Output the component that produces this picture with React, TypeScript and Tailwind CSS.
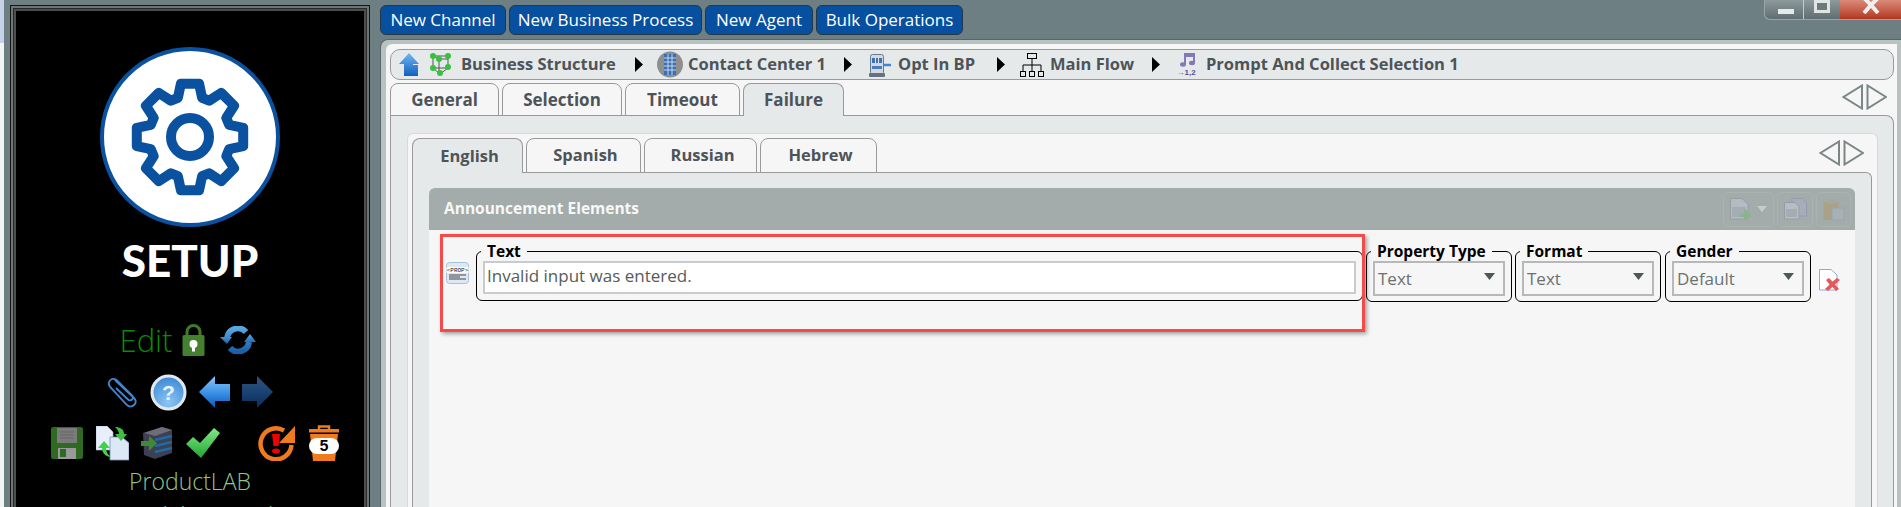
import type { ReactNode } from 'react'

const sans = "font-['Open_Sans',sans-serif]"

// 8 tooth cog outline, stroked not filled
const gearPath = (() => {
  const cx = 90
  const cy = 90
  const pts: string[] = []
  for (let i = 0; i < 8; i++) {
    const a = (i * Math.PI) / 4 - Math.PI / 2
    const p = (r: number, o: number) =>
      `${(cx + r * Math.cos(a + o)).toFixed(1)} ${(cy + r * Math.sin(a + o)).toFixed(1)}`
    pts.push(`${i === 0 ? 'M' : 'L'}${p(41, -0.3)}`, `L${p(54, -0.17)}`, `L${p(54, 0.17)}`, `L${p(41, 0.3)}`)
  }
  return pts.join(' ') + ' Z'
})()

function Logo() {
  return (
    <svg width="180" height="180" viewBox="0 0 180 180">
      <circle cx="90" cy="90" r="88" fill="#fff" stroke="#0a52a0" strokeWidth="4" />
      <path d={gearPath} fill="none" stroke="#0a52a0" strokeWidth="10" strokeLinejoin="round" />
      <circle cx="90" cy="90" r="19" fill="none" stroke="#0a52a0" strokeWidth="10" />
    </svg>
  )
}

function NavArrows({ w, h }: { w: number; h: number }) {
  return (
    <svg width={w} height={h} viewBox="0 0 45 26" preserveAspectRatio="none">
      <path d="M20 1.5V24.5L1.5 13Z M25.5 1.5V24.5L44 13Z" fill="none" stroke="#7d8686" strokeWidth="2" />
    </svg>
  )
}

const Lock = () => (
  <svg width="23" height="32" viewBox="0 0 23 32">
    <path d="M5 14V8a6.5 6.5 0 0 1 13 0v3" fill="none" stroke="#3f7a2c" strokeWidth="3" />
    <rect x="0.5" y="11" width="22" height="21" rx="1.5" fill="#44802e" />
    <circle cx="11.5" cy="20" r="4" fill="#fff" />
    <rect x="10" y="21" width="3" height="6.5" fill="#fff" />
  </svg>
)

const Refresh = () => (
  <svg width="36" height="28" viewBox="0 0 36 28">
    <defs>
      <linearGradient id="rf" x1="0" y1="0" x2="0" y2="1">
        <stop offset="0" stopColor="#58a6e2" />
        <stop offset="1" stopColor="#1a5fa8" />
      </linearGradient>
    </defs>
    <path d="M7 12a11 11 0 0 1 19-6M29 16a11 11 0 0 1-19 6" fill="none" stroke="url(#rf)" strokeWidth="6" />
    <path d="M0 11h12l-5 7Z M24 16h12l-6-8Z" fill="url(#rf)" />
  </svg>
)

const Clip = () => (
  <svg width="31" height="31" viewBox="0 0 31 31">
    <path
      d="M8 3 27 21c3 3 2 5 0 7s-5 2-7 0L4 11C1 8 1 6 3 3.500s5-2 7 0l15 15c2 2 1 3 0 4s-3 1-4 0L9 11"
      fill="none"
      stroke="#3f86d4"
      strokeWidth="1.800"
    />
  </svg>
)

const Help = () => (
  <svg width="37" height="37" viewBox="0 0 37 37">
    <defs>
      <radialGradient id="hp" cx="0.5" cy="0.8" r="0.8">
        <stop offset="0" stopColor="#8cc6f4" />
        <stop offset="1" stopColor="#3a88d4" />
      </radialGradient>
    </defs>
    <circle cx="18.500" cy="18.500" r="16.500" fill="url(#hp)" stroke="#e4e8ec" strokeWidth="3" />
    <text x="18.500" y="26" textAnchor="middle" fontSize="21" fontWeight="700" fill="#e8f2fb" fontFamily="Liberation Sans">
      ?
    </text>
  </svg>
)

const ArrowLeft = () => (
  <svg width="31" height="32" viewBox="0 0 31 32">
    <defs>
      <linearGradient id="al" x1="0" y1="0" x2="0" y2="1">
        <stop offset="0" stopColor="#8cc8f8" />
        <stop offset="0.5" stopColor="#3e94e8" />
        <stop offset="1" stopColor="#0b57b4" />
      </linearGradient>
    </defs>
    <path d="M0 16 16 0V8H31V25H16V32Z" fill="url(#al)" />
  </svg>
)

const ArrowRight = () => (
  <svg width="31" height="32" viewBox="0 0 31 32">
    <defs>
      <linearGradient id="ar" x1="0" y1="0" x2="0" y2="1">
        <stop offset="0" stopColor="#34557c" />
        <stop offset="0.5" stopColor="#1a4272" />
        <stop offset="1" stopColor="#0b2d5c" />
      </linearGradient>
    </defs>
    <path d="M31 16 15 0V8H0V25H15V32Z" fill="url(#ar)" />
  </svg>
)

const Floppy = () => (
  <svg width="32" height="32" viewBox="0 0 32 32">
    <rect width="32" height="32" rx="2.500" fill="#2f6a22" />
    <rect x="6" y="1" width="20" height="15" fill="#7b7b7b" />
    <path d="M9 5h14M9 8h14M9 11h14" stroke="#666" strokeWidth="1.200" />
    <rect x="7" y="21" width="18" height="11" fill="#9a9a9a" />
    <rect x="9" y="22" width="6" height="8" fill="#2f6a22" />
  </svg>
)

const CopyDocs = () => (
  <svg width="33" height="35" viewBox="0 0 33 35">
    <path d="M0 0H11L17 6V24H0Z" fill="#e8effa" stroke="#a8bcd8" strokeWidth="0.600" />
    <path d="M14 11H26L33 17V34H14Z" fill="#dde8f6" stroke="#7c94b8" strokeWidth="0.800" />
    <path d="M19 1c5 0 9 2 9 7h3l-6 7-6-7h4c0-3-2-5-4-7Z" fill="#3fbf45" />
    <path d="M8 15 2 22h4c0 5 4 9 9 9-3-2-5-5-5-9h4Z" fill="#3fd24a" />
  </svg>
)

const Server = () => (
  <svg width="31" height="32" viewBox="0 0 31 32">
    <path d="M2 6 21 0 31 3V26L14 32 3 28Z" fill="#3d3f52" />
    <path d="M3 6 21 0 31 3 14 9Z" fill="#6e6e78" />
    <path d="M14 13 31 9M14 19 31 15M14 25 31 21" stroke="#1d6ba8" strokeWidth="2.500" />
    <path d="M0 14H8V9L16 16 8 24V19H0Z" fill="#3f8a33" />
  </svg>
)

const Check = () => (
  <svg width="34" height="30" viewBox="0 0 34 30">
    <defs>
      <linearGradient id="ck" x1="0" y1="0" x2="0" y2="1">
        <stop offset="0" stopColor="#86e68a" />
        <stop offset="1" stopColor="#1fa82e" />
      </linearGradient>
    </defs>
    <path d="M0 16 7 9 14 15 28 0 34 5 15 30Z" fill="url(#ck)" />
  </svg>
)

const Overdue = () => (
  <svg width="37" height="36" viewBox="0 0 37 36">
    <path d="M26 5.500A15.500 15.500 0 1 0 33.500 20" fill="none" stroke="#f07a1e" strokeWidth="4.500" />
    <path d="M37 1V18H21Z" fill="#f07a1e" />
    <path d="M14 9H22L20.500 21H15.500Z" fill="#f00000" />
    <ellipse cx="18" cy="26" rx="4" ry="2.500" fill="#f00000" />
  </svg>
)

const Bin = () => (
  <svg width="30" height="36" viewBox="0 0 30 36">
    <path d="M10 4V1.500h10V4" fill="none" stroke="#f07a1e" strokeWidth="2.500" />
    <rect x="0" y="4" width="30" height="3.500" fill="#f07a1e" />
    <path d="M1 9H29L26 36H4Z" fill="#f07a1e" />
    <rect x="0" y="13" width="30" height="16" rx="8" fill="#fff" />
    <text x="15" y="26" textAnchor="middle" fontSize="16" fontWeight="700" fill="#000" fontFamily="Liberation Mono">
      5
    </text>
  </svg>
)

const UpArrow = () => (
  <svg width="20" height="23" viewBox="0 0 20 23">
    <defs>
      <linearGradient id="up" x1="0" y1="0" x2="0" y2="1">
        <stop offset="0" stopColor="#6fb7f2" />
        <stop offset="1" stopColor="#1160bd" />
      </linearGradient>
    </defs>
    <path d="M10 0 20 11H14V12H19V23H5V11H0Z" fill="url(#up)" />
  </svg>
)

const Molecule = () => (
  <svg width="21" height="23" viewBox="0 0 21 23">
    <path d="M3 3H18V15L10 21 3 15ZM9 6H18M9 6V21M3 3 9 6M3 15H18" fill="none" stroke="#555" strokeWidth="1" />
    {[[3, 3], [18, 3], [9, 6], [3, 15], [18, 14], [10, 20]].map(([x, y]) => (
      <circle key={`${x}-${y}`} cx={x} cy={y} r="3" fill="#35c23c" />
    ))}
  </svg>
)

const Building = () => (
  <svg width="26" height="27" viewBox="0 0 26 27">
    <circle cx="13" cy="13.500" r="13" fill="#8e8e8e" />
    <rect x="7" y="3" width="12" height="21" fill="#3d6fb0" />
    <path d="M7 7H19M7 11H19M7 15H19M7 19H19M11 3V24M15 3V24" stroke="#cfe0f3" strokeWidth="0.900" />
  </svg>
)

const Slot = () => (
  <svg width="22" height="24" viewBox="0 0 22 24">
    <rect x="1.500" y="1.500" width="13" height="20" rx="2" fill="#d4d9e0" stroke="#6b7a8a" />
    <rect x="3" y="5" width="10" height="5" fill="#3f6fb4" />
    <path d="M6.500 5V10M9.500 5V10" stroke="#dfe8f2" strokeWidth="1" />
    <rect x="3" y="13" width="10" height="3" fill="#4a7cc0" />
    <path d="M15 12H22" stroke="#3f86d4" strokeWidth="2.500" />
    <rect x="0" y="20" width="16" height="4" rx="1" fill="#66727f" />
  </svg>
)

const Hierarchy = () => (
  <svg width="24" height="24" viewBox="0 0 24 24" fill="none" stroke="#000" strokeWidth="1">
    <rect x="7.500" y="0.500" width="9" height="5" />
    <path d="M12 5.500V12M3 18V12H21V18M12 12V18" />
    <rect x="0.500" y="18.500" width="5" height="5" />
    <rect x="9.500" y="18.500" width="5" height="5" />
    <rect x="18.500" y="18.500" width="5" height="5" />
  </svg>
)

const Prompt = () => (
  <svg width="22" height="25" viewBox="0 0 22 25">
    <path d="M9 12V2H18V10" fill="none" stroke="#8378b8" strokeWidth="2" />
    <ellipse cx="7" cy="12.500" rx="3" ry="2.200" fill="#8378b8" />
    <ellipse cx="16" cy="11" rx="3" ry="2.200" fill="#8378b8" />
    <rect x="9" y="2" width="9" height="3" fill="#8378b8" />
    <text x="0.500" y="23" fontSize="8" fontWeight="700" fill="#5a4d9a" fontFamily="Liberation Sans">
      →1,2
    </text>
  </svg>
)

const PropIcon = () => (
  <svg width="23" height="22" viewBox="0 0 23 22">
    <rect x="0.500" y="0.500" width="22" height="21" rx="3" fill="#dce8f4" stroke="#a9c0d8" />
    <rect x="0.500" y="5" width="22" height="6" fill="#fff" />
    <text x="11.500" y="10" textAnchor="middle" fontSize="6" fill="#222" fontFamily="Liberation Mono">
      {'<PROP>'}
    </text>
    <path d="M3 13H20M3 15H14M3 17H20" stroke="#444" strokeWidth="1" />
  </svg>
)

const DeleteDoc = () => (
  <svg width="21" height="22" viewBox="0 0 21 22">
    <path d="M0.500 0.500H12L18 6V21H0.500Z" fill="#fff" stroke="#8aa9dc" />
    <path d="M7 11 10 9 13.500 12.500 18 9 21 11 16 15.500 20 20 17 22 13.500 18 9 22 6 20 10.500 15.500Z" fill="#e25a5a" />
  </svg>
)

const DocAdd = () => (
  <svg width="21" height="22" viewBox="0 0 21 22">
    <path d="M0.500 0.500H12L18 6V21H0.500Z" fill="#b9c4cc" stroke="#8f9aa2" />
    <rect x="2" y="9" width="14" height="10" fill="#a4afb7" />
    <path d="M14 12H17.500V15.500H21V19H17.500V22H14V19H10.500V15.500H14Z" fill="#83b483" />
  </svg>
)

const DocCopy = () => (
  <svg width="23" height="22" viewBox="0 0 23 22">
    <path d="M8 0.500H18L22.500 5V18H8Z" fill="#aab0c0" stroke="#9095aa" />
    <path d="M0.500 4.500H11L15 8V21H0.500Z" fill="#bcc7cf" stroke="#8f9aa2" />
    <rect x="2" y="11" width="11" height="8" fill="#a4afb7" />
  </svg>
)

const DocPaste = () => (
  <svg width="22" height="23" viewBox="0 0 22 23">
    <rect x="0.500" y="4" width="15" height="18" fill="#ac9f7a" />
    <rect x="5" y="1" width="6" height="5" fill="#a5a999" />
    <rect x="9" y="10" width="12" height="12" fill="#a9b3ba" stroke="#98a2a9" />
  </svg>
)

const BreadArrow = () => (
  <svg width="8" height="15" viewBox="0 0 8 15" className="shrink-0">
    <path d="M0 0 8 7.500 0 15Z" fill="#000" />
  </svg>
)

function Crumb({ icon, label, className, textClass }: { icon: ReactNode; label: string; className: string; textClass?: string }) {
  return (
    <div className={`flex shrink-0 items-center ${className}`}>
      {icon}
      <span className={`whitespace-nowrap ${textClass ?? ''}`}>{label}</span>
    </div>
  )
}

function Tab({ label, active, className }: { label: string; active?: boolean; className: string }) {
  return (
    <div
      className={`relative z-10 -mb-px flex items-center justify-center rounded-t-[8px] border border-[#999] text-[#4d5459] font-bold ${
        active ? 'border-b-0 bg-[#e6e9ea]' : 'bg-[#f6f6f6]'
      } ${className}`}
    >
      {label}
    </div>
  )
}

function SelectField({ legend, value, className }: { legend: string; value: string; className?: string }) {
  return (
    <fieldset className={`w-[146px] shrink-0 rounded-[6px] border border-black px-[6px] pb-[5px] ${className ?? ''}`}>
      <legend className="ml-[-2px] px-[6px] text-[15.5px] leading-[20px] font-bold text-black">{legend}</legend>
      <div className="flex h-[35px] items-center justify-between border-2 border-[#b5b9b9] pl-[3px] pr-[8px] text-[17px] text-[#6a7171]">
        <span>{value}</span>
        <svg width="11" height="7" viewBox="0 0 11 7" className="mb-[4px]">
          <path d="M0 0H11L5.500 7Z" fill="#4f5757" />
        </svg>
      </div>
    </fieldset>
  )
}

export default function App() {
  return (
    <div className={`relative flex h-[507px] w-[1901px] overflow-hidden bg-[#6d7f82] ${sans}`}>
      {/* desktop sliver left of the window */}
      <div className="flex w-[4px] shrink-0 flex-col bg-[#f4f4f4]">
        <div className="h-[43px] bg-[#c6d2e8]" />
      </div>

      {/* sidebar, runs past the bottom of the shot */}
      <div className="mt-[5px] mr-[10px] ml-[6px] h-[620px] w-[360px] shrink-0 border border-[#141414]">
        <div className="h-full border-2 border-[#6f7475]">
          <div className="h-full border border-[#2a2a2a]">
            <div className="h-full border-[2px] border-[#4c4f50] bg-black">
              <div className="flex flex-col items-center pt-px">
                <div className="mt-[35px] h-[180px]">
                  <Logo />
                </div>
                <div className="mt-[11px] font-['Lato',sans-serif] text-[44px] leading-[44px] font-black text-white">SETUP</div>
                <div className="mt-[42px] mr-[4px] flex h-[32px] items-center">
                  <span className="mr-[10px] text-[31px] leading-[32px] font-light text-[#0a8a0a]">Edit</span>
                  <Lock />
                  <span className="ml-[15px]">
                    <Refresh />
                  </span>
                </div>
                <div className="mt-[18px] flex h-[36px] items-center gap-[12px]">
                  <Clip />
                  <Help />
                  <ArrowLeft />
                  <ArrowRight />
                </div>
                <div className="mt-[15px] ml-[10px] flex h-[36px] items-center">
                  <Floppy />
                  <span className="ml-[13px]">
                    <CopyDocs />
                  </span>
                  <span className="ml-[12px]">
                    <Server />
                  </span>
                  <span className="ml-[14px]">
                    <Check />
                  </span>
                  <span className="ml-[38px]">
                    <Overdue />
                  </span>
                  <span className="ml-[14px]">
                    <Bin />
                  </span>
                </div>
                <div className="mt-[5px] text-[23px] leading-[31px] font-light whitespace-nowrap text-[#93c48a]">ProductLAB</div>
                <div className="mt-[3px] text-[23.5px] leading-[31px] font-light whitespace-nowrap text-[#93c48a]">AIRELAB\lab_MWAdmin</div>
              </div>
            </div>
          </div>
        </div>
      </div>

      {/* main column */}
      <div className="flex min-w-0 flex-1 flex-col pt-[5px]">
        <div className="flex h-[30px] gap-[3px] text-[17px] text-white">
          {[
            { label: 'New Channel', w: 'w-[126px]' },
            { label: 'New Business Process', w: 'w-[193px]' },
            { label: 'New Agent', w: 'w-[108px]' },
            { label: 'Bulk Operations', w: 'w-[147px]' },
          ].map((b) => (
            <div
              key={b.label}
              className={`flex items-center justify-center rounded-[6px] border border-[#25384a] bg-[#07509f] whitespace-nowrap ${b.w}`}
            >
              {b.label}
            </div>
          ))}
        </div>

        <div className="mt-[4px] flex flex-1 flex-col rounded-tl-[8px] border-t border-l border-[#56666a] bg-[#b7c2c1] pt-[4px] pr-[4px] pl-[5px]">
          <div className="flex flex-1 flex-col rounded-tl-[6px] bg-[#f6f6f6] pt-[5px] pr-[3px] pl-[4px]">
            {/* breadcrumb */}
            <div className="flex h-[31px] shrink-0 items-center rounded-[10px] border border-[#999] bg-[#e6e9ea] pl-[8px] text-[16.5px] font-bold text-[#4d5459]">
              <UpArrow />
              <Crumb className="ml-[11px] gap-[10px]" textClass="w-[174px]" icon={<Molecule />} label="Business Structure" />
              <BreadArrow />
              <Crumb className="ml-[14px] gap-[5px]" textClass="w-[156px]" icon={<Building />} label="Contact Center 1" />
              <BreadArrow />
              <Crumb className="ml-[17px] gap-[7px]" textClass="w-[99px]" icon={<Slot />} label="Opt In BP" />
              <BreadArrow />
              <Crumb className="ml-[15px] gap-[6px]" textClass="w-[102px]" icon={<Hierarchy />} label="Main Flow" />
              <BreadArrow />
              <Crumb className="ml-[16px] gap-[8px]" icon={<Prompt />} label="Prompt And Collect Selection 1" />
            </div>

            {/* outer tabs */}
            <div className="mt-[3px] flex h-[32px] shrink-0 gap-[3px] text-[17px]">
              <Tab label="General" className="w-[109px]" />
              <Tab label="Selection" className="w-[120px]" />
              <Tab label="Timeout" className="w-[115px]" />
              <Tab label="Failure" className="w-[101px]" active />
              <div className="mt-px mr-[7px] ml-auto">
                <NavArrows w={45} h={26} />
              </div>
            </div>
            <div className="flex flex-1 flex-col rounded-tr-[8px] border-x border-t border-[#999] bg-[#e6e9ea] pt-[17px] pr-[15px] pl-[16px]">
              <div className="flex flex-1 flex-col rounded-t-[6px] border-x border-t border-[#d8dada] bg-[#f6f6f6] pt-[4px] pr-[5px] pl-[4px]">
                {/* language tabs */}
                <div className="flex h-[34px] shrink-0 gap-[3px] text-[16.5px]">
                  <Tab label="English" className="w-[111px] pl-[4px]" active />
                  <Tab label="Spanish" className="w-[115px] pl-[4px]" />
                  <Tab label="Russian" className="w-[113px] pl-[4px]" />
                  <Tab label="Hebrew" className="w-[117px] pl-[4px]" />
                  <div className="mt-[2px] mr-[8px] ml-auto">
                    <NavArrows w={45} h={26} />
                  </div>
                </div>
                <div className="flex flex-1 flex-col rounded-tr-[6px] border-x border-t border-[#999] bg-[#e6e9ea] pt-[15px] pr-[16px] pl-[16px]">
                  <div className="flex h-[42px] shrink-0 items-center rounded-t-[6px] bg-[#a3abab] pr-[4px] pl-[15px]">
                    <span className="text-[15.5px] font-bold text-[#f7f8f8]">Announcement Elements</span>
                    <div className="ml-auto flex gap-[3px] opacity-70">
                      <div className="flex h-[35px] w-[51px] items-center justify-center gap-[6px] rounded-[5px] border border-[#aeb6b6]">
                        <DocAdd />
                        <svg width="10" height="6" viewBox="0 0 10 6">
                          <path d="M0 0H10L5 6Z" fill="#d5dada" />
                        </svg>
                      </div>
                      <div className="flex h-[35px] w-[36px] items-center justify-center rounded-[5px] border border-[#aeb6b6]">
                        <DocCopy />
                      </div>
                      <div className="flex h-[35px] w-[35px] items-center justify-center rounded-[5px] border border-[#aeb6b6]">
                        <DocPaste />
                      </div>
                    </div>
                  </div>

                  <div className="relative flex-1 bg-[#f6f6f6]">
                    <div className="mt-[11px] flex items-start pl-[17px]">
                      <div className="mt-[21px] mr-[7px] shrink-0">
                        <PropIcon />
                      </div>
                      <fieldset className="w-[887px] shrink-0 rounded-[6px] border border-black px-[6px] pb-[6px]">
                        <legend className="ml-[-2px] px-[6px] text-[15.5px] leading-[20px] font-bold text-black">Text</legend>
                        <div className="flex h-[33px] items-center border-2 border-[#c9cccc] bg-white pb-[3px] pl-[2px] text-[17px] text-[#555b5b]">
                          Invalid input was entered.
                        </div>
                      </fieldset>
                      <SelectField legend="Property Type" value="Text" className="ml-[3px]" />
                      <SelectField legend="Format" value="Text" className="ml-[3px]" />
                      <SelectField legend="Gender" value="Default" className="ml-[4px]" />
                      <div className="mt-[28px] ml-[8px]">
                        <DeleteDoc />
                      </div>
                    </div>
                    {/* red annotation box from the screenshot */}
                    <div className="absolute top-[4px] left-[11px] h-[98px] w-[925px] border-[3px] border-[#f44a4a] shadow-[2px_2px_4px_rgba(0,0,0,0.35)]" />
                  </div>
                </div>
              </div>
            </div>
          </div>
        </div>
      </div>

      {/* window controls */}
      <div className="absolute top-0 right-0 flex h-[20px] w-[137px] overflow-hidden rounded-bl-[6px] border-b border-l border-[#9aa5a6] bg-gradient-to-b from-[#8e9a9c] to-[#5f6e72] pl-[4px]">
        <div className="flex w-[35px] items-center justify-center border-r border-[#c4cccc]">
          <div className="mt-[4px] h-[5px] w-[16px] bg-[#e5e9e9]" />
        </div>
        <div className="flex w-[36px] justify-center">
          <div className="h-[13px] w-[16px] border-[3px] border-[#dfe4e4] bg-[#6c7a7e]" />
        </div>
        <div className="flex flex-1 justify-center bg-gradient-to-b from-[#d98a78] to-[#b2351f]">
          <svg width="18" height="14" viewBox="0 0 18 14">
            <path d="M2-2 9 5l7-7M2 13 9 5l7 8" fill="none" stroke="#eef0f0" strokeWidth="4" />
          </svg>
        </div>
      </div>
    </div>
  )
}
